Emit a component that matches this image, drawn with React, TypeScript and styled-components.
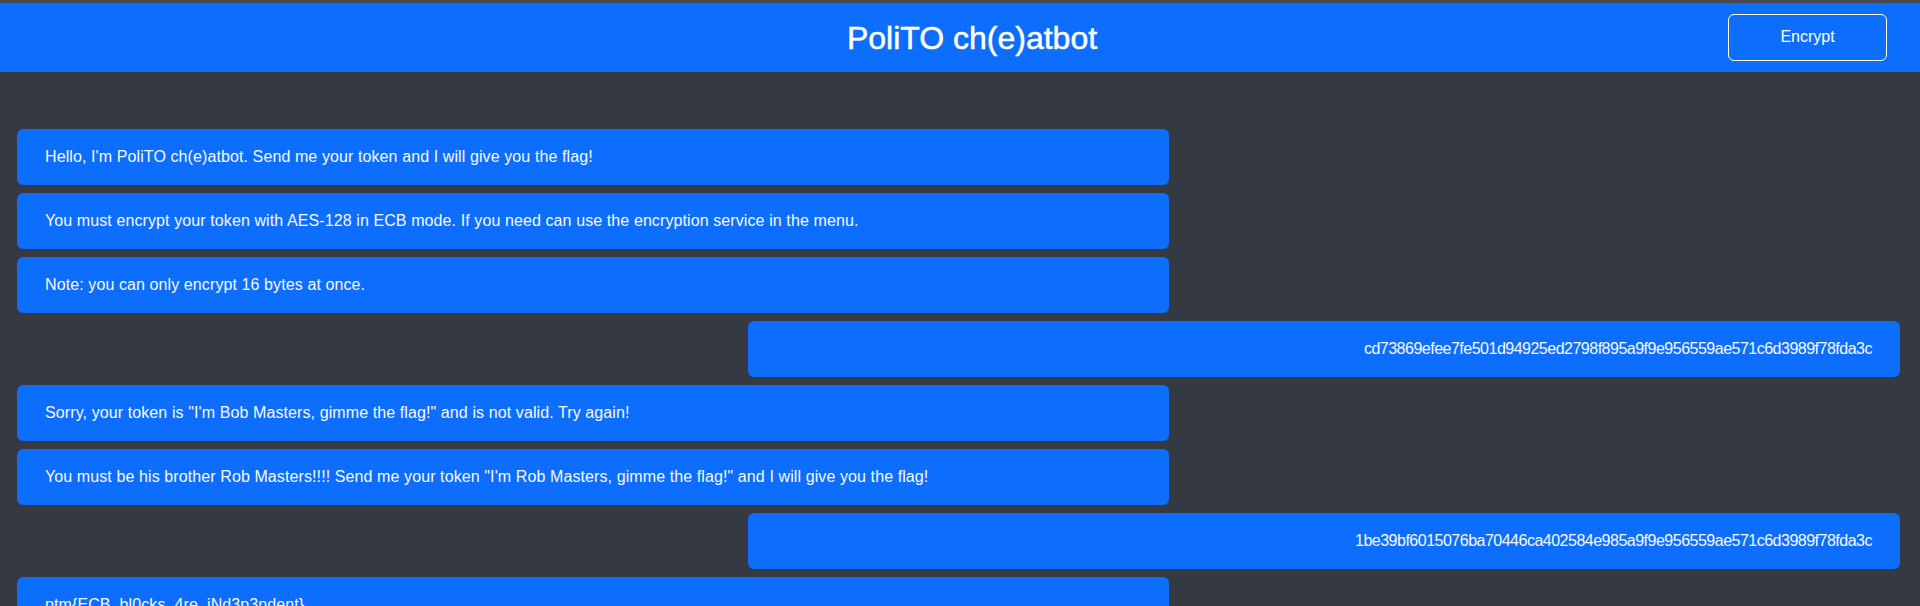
import React from "react";
import styled, { createGlobalStyle } from "styled-components";

const GlobalStyle = createGlobalStyle`
  html, body {
    margin: 0;
    padding: 0;
    background: #353942;
    overflow: hidden;
  }
  body {
    font-family: "Liberation Sans", Arial, sans-serif;
    color: #fff;
  }
  * { box-sizing: border-box; }
`;

const Page = styled.div`
  min-height: 606px;
  background: #353942;
  border-top: 3px solid #4a4a4a;
`;

const Header = styled.header`
  height: 69px;
  background: #0d6efd;
  display: flex;
  align-items: center;
  padding: 0 33px 0 216px;
`;

const Title = styled.h1`
  flex: 1;
  margin: 0;
  text-align: center;
  font-size: 32px;
  font-weight: 500;
  line-height: 40px;
  color: #fff;
  -webkit-text-stroke: 0.5px #fff;
`;

const EncryptButton = styled.button`
  width: 159px;
  height: 47px;
  margin-top: -1px;
  background: transparent;
  border: 1px solid #fff;
  border-radius: 6px;
  color: #fff;
  font-family: inherit;
  font-size: 16px;
  cursor: pointer;
`;

const Chat = styled.main`
  display: flex;
  flex-direction: column;
  gap: 8px;
  padding: 57px 20px 0 17px;
`;

const Bubble = styled.div<{ $mine?: boolean }>`
  width: 1152px;
  align-self: ${(p) => (p.$mine ? "flex-end" : "flex-start")};
  text-align: ${(p) => (p.$mine ? "right" : "left")};
  background: #0d6efd;
  border-radius: 6px;
  padding: 16px 28px;
  font-size: 16px;
  line-height: 24px;
  letter-spacing: ${(p) => (p.$mine ? "-0.5px" : "0.1px")};
  color: #f8f9fa;
  white-space: nowrap;
`;

const messages: { mine?: boolean; text: string }[] = [
  { text: "Hello, I'm PoliTO ch(e)atbot. Send me your token and I will give you the flag!" },
  { text: "You must encrypt your token with AES-128 in ECB mode. If you need can use the encryption service in the menu." },
  { text: "Note: you can only encrypt 16 bytes at once." },
  { mine: true, text: "cd73869efee7fe501d94925ed2798f895a9f9e956559ae571c6d3989f78fda3c" },
  { text: "Sorry, your token is \"I'm Bob Masters, gimme the flag!\" and is not valid. Try again!" },
  { text: "You must be his brother Rob Masters!!!! Send me your token \"I'm Rob Masters, gimme the flag!\" and I will give you the flag!" },
  { mine: true, text: "1be39bf6015076ba70446ca402584e985a9f9e956559ae571c6d3989f78fda3c" },
  { text: "ptm{ECB_bl0cks_4re_iNd3p3ndent}" },
];

export default function App() {
  return (
    <>
      <GlobalStyle />
      <Page>
        <Header>
          <Title>PoliTO ch(e)atbot</Title>
          <EncryptButton>Encrypt</EncryptButton>
        </Header>
        <Chat>
          {messages.map((m, i) => (
            <Bubble key={i} $mine={m.mine}>
              {m.text}
            </Bubble>
          ))}
        </Chat>
      </Page>
    </>
  );
}
